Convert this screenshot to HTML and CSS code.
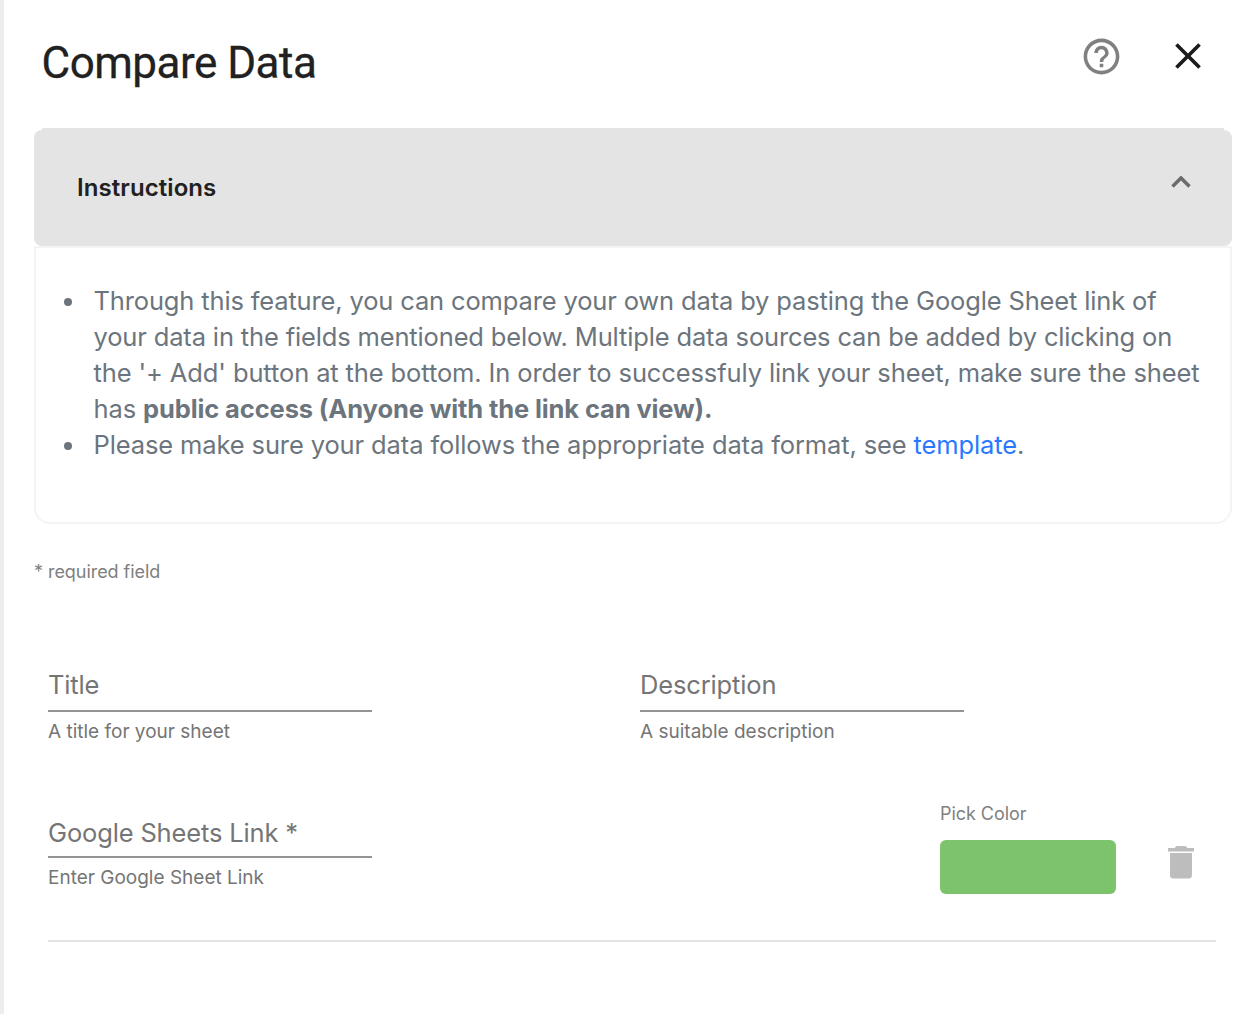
FILE: index.html
```html
<!DOCTYPE html>
<html lang="en">
<head>
<meta charset="utf-8">
<title>Compare Data</title>
<link rel="stylesheet" href="styles.css">
</head>
<body>
<main class="panel">
  <header class="header">
    <h1 class="title">Compare Data</h1>
    <svg class="help" viewBox="0 0 24 24"><path d="M11 18h2v-2h-2v2zm1-16C6.480 2 2 6.480 2 12s4.480 10 10 10 10-4.480 10-10S17.520 2 12 2zm0 18c-4.410 0-8-3.590-8-8s3.590-8 8-8 8 3.590 8 8-3.590 8-8 8zm0-14c-2.210 0-4 1.790-4 4h2c0-1.100.9-2 2-2s2 .9 2 2c0 2-3 1.750-3 5h2c0-2.250 3-2.500 3-5 0-2.210-1.790-4-4-4z"/></svg>
    <svg class="close" viewBox="0 0 24 24"><path d="M19 6.410L17.590 5 12 10.590 6.410 5 5 6.410 10.590 12 5 17.590 6.410 19 12 13.410 17.590 19 19 17.590 13.410 12z"/></svg>
  </header>
  <section class="instructions">
    <div class="bar-edge"></div>
    <div class="bar">
      <h2 class="bar-title">Instructions</h2>
      <svg class="chevron" viewBox="0 0 20 12"><path d="M1.500 10.500L10 2l8.500 8.500"/></svg>
    </div>
    <div class="body">
      <ul class="list">
        <li class="item"><div><span class="line l1">Through this feature, you can compare your own data by pasting the Google Sheet link of</span><span class="line l2">your data in the fields mentioned below. Multiple data sources can be added by clicking on</span><span class="line l3">the '+ Add' button at the bottom. In order to successfuly link your sheet, make sure the sheet</span><span class="line l4">has <b>public access (Anyone with the link can view).</b></span></div></li>
        <li class="item"><span class="line l5">Please make sure your data follows the appropriate data format, see <a class="link">template</a>.</span></li>
      </ul>
    </div>
  </section>
  <p class="required">* required field</p>
  <form class="form">
    <div class="row">
      <div class="field"><label class="label">Title</label><span class="hint">A title for your sheet</span></div>
      <div class="field"><label class="label">Description</label><span class="hint">A suitable description</span></div>
    </div>
    <div class="row source">
      <div class="field"><label class="label link-label">Google Sheets Link *</label><span class="hint">Enter Google Sheet Link</span></div>
      <div class="color"><span class="color-label">Pick Color</span><div class="swatch"></div></div>
      <svg class="trash" viewBox="0 0 26 33"><path d="M2 7h22v22q0 3.500-3.500 3.500h-15Q2 32.500 2 29zM0 2h6.500l2-2h9l2 2H26v3.500H0z"/></svg>
    </div>
  </form>
</main>
</body>
</html>
```
FILE: styles.css
```css
* { box-sizing: border-box; }
body { margin: 0; background: #fff; font-family: Inter, sans-serif; }
.panel { height: 1014px; border-left: 4px solid #ededed; padding: 0 28px 0 30px; overflow: hidden; }
.header { display: flex; height: 128px; padding-left: 7.500px; }
.title { margin: 36px auto 0 0; font: 400 44px/54px Roboto, sans-serif; color: #212121; letter-spacing: -0.5px; -webkit-text-stroke: 0.3px #212121; }
.help { width: 43px; height: 43px; margin: 35px 43px 0 0; fill: #808080; }
.close { width: 44px; height: 44px; margin: 34.300px 22px 0 0; fill: #1c1c1c; }
.bar-edge { height: 2px; margin: 0 8px; background: #e4e4e4; }
.bar { display: flex; height: 116px; background: #e4e4e4; border-radius: 8px; padding: 0 41px 0 43px; justify-content: space-between; }
.bar-title { margin: 42px 0 0; font-size: 24px; line-height: 32px; font-weight: 600; color: #212121; letter-spacing: 0.08px; }
.chevron { width: 20px; height: 12px; margin-top: 46px; fill: none; stroke: #6b6b6b; stroke-width: 3.500; }
.body { height: 278px; border: 2px solid #f4f4f4; border-radius: 0 0 16px 16px; padding-top: 35px; }
.list { margin: 0; padding-left: 28px; list-style: none; font-size: 25.500px; line-height: 36px; color: #6c757d; }
.item { display: flex; }
.item::before { content: ""; flex: none; width: 8px; height: 8px; margin: 15px 21.500px 0 0; border-radius: 50%; background: #6c757d; }
.line { display: block; white-space: nowrap; }
.l1 { letter-spacing: -0.150px; }
.l2 { letter-spacing: -0.150px; }
.l3 { letter-spacing: -0.115px; }
.l4 { letter-spacing: -0.120px; }
.l5 { letter-spacing: -0.120px; }
.link { color: #2979ff; }
.required { margin: 36px 0 0; font-size: 18px; line-height: 24px; color: #808080; letter-spacing: -0.05px; }
.form { margin: 78px 16px 0 14px; }
.row { display: flex; gap: 268px; height: 132px; }
.field { width: 324px; color: #757575; }
.label { display: block; height: 50px; border-bottom: 2px solid #949494; font-size: 25.500px; line-height: 46px; letter-spacing: -0.150px; }
.link-label { line-height: 50px; }
.hint { display: block; margin-top: 8px; font-size: 19px; line-height: 24px; }
.source { gap: 0; height: 148px; padding-top: 14px; border-bottom: 2px solid #e3e3e3; }
.color { width: 176px; margin: -6px 52px 0 568px; }
.color-label { display: block; font-size: 18px; line-height: 24px; color: #808080; letter-spacing: -0.05px; }
.swatch { height: 54px; margin-top: 14px; border-radius: 6px; background: #7dc36b; }
.trash { width: 26px; height: 33px; margin-top: 38px; fill: #bdbdbd; }
```
